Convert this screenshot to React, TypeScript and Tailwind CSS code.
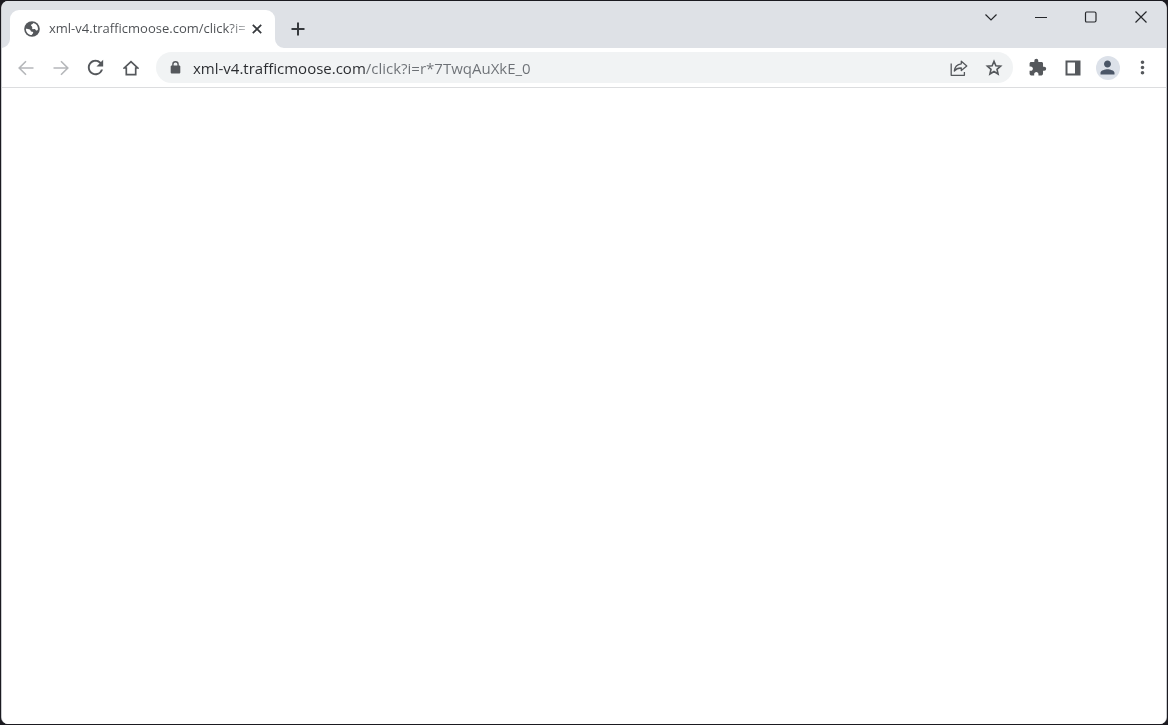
import { useState, type ReactNode } from "react";
import { MdExtension, MdMoreVert, MdPerson, MdRefresh } from "react-icons/md";

function ToolButton({
  label,
  disabled = false,
  children,
}: {
  label: string;
  disabled?: boolean;
  children: ReactNode;
}) {
  return (
    <button
      type="button"
      aria-label={label}
      disabled={disabled}
      className="flex h-8 w-[35px] shrink-0 items-center justify-center text-[#55585c] disabled:text-[#b5b7ba]"
    >
      {children}
    </button>
  );
}

function CaptionButton({ label, d }: { label: string; d: string }) {
  return (
    <button
      type="button"
      aria-label={label}
      className="flex h-8 w-[50px] items-center justify-center text-[#25272b]"
    >
      <svg width="14" height="14" viewBox="0 0 14 14" fill="none" stroke="currentColor" strokeWidth="1.2">
        <path d={d} />
      </svg>
    </button>
  );
}

function TabStrip() {
  return (
    <header className="flex h-[47px] shrink-0 items-start justify-between bg-[#dee1e6]">
      <div className="flex min-w-0 items-end pt-[9px] pl-2">
        <div className="relative flex h-[38px] w-[265px] items-center rounded-t-[9px] bg-white pr-2 pl-[14px]">
          <svg className="absolute bottom-0 -left-[9px] text-white" width="9" height="9" viewBox="0 0 9 9" fill="currentColor">
            <path d="M9 0v9H0a9 9 0 0 0 9-9z" />
          </svg>
          <svg className="absolute -right-[9px] bottom-0 text-white" width="9" height="9" viewBox="0 0 9 9" fill="currentColor">
            <path d="M0 0v9h9a9 9 0 0 1-9-9z" />
          </svg>
          <svg className="shrink-0" width="16" height="16" viewBox="0 0 16 16">
            <circle cx="8" cy="8" r="7.8" fill="#55585c" />
            <path
              fill="#fff"
              d="M9.300 2.100C8.900 3.400 7.200 3.300 7 4.300c-.1.900 1 .8 1.200 1.600.2.800-.4 1.500.3 2.100.8.600 1.700-.3 2.600.2.700.5.600 1.300 1.400 1.300.7 0 1.200-.5 1.500-1.300C14.100 5.100 12.100 2.700 9.300 2.100zM1.900 7.700c1.300.2 2.900.1 3.900.8.900.6.700 1.700 1.500 2.100.8.300 1.700 0 1.900.8.200.9-.9 1.300-1.500 2.700C4.500 14 1.800 11.200 1.900 7.700z"
            />
          </svg>
          <span className="ml-[9px] min-w-0 flex-1 overflow-hidden bg-linear-to-r from-[#4b4e52] from-90% to-[#c8cacc] bg-clip-text text-[13px] whitespace-nowrap text-transparent">
            xml-v4.trafficmoose.com/click?i=
          </span>
          <button type="button" aria-label="Close tab" className="flex size-5 shrink-0 items-center justify-center text-[#36393d]">
            <svg width="10" height="10" viewBox="0 0 10 10" fill="none" stroke="currentColor" strokeWidth="1.7">
              <path d="M.8.8l8.4 8.4M9.2.8L.8 9.2" />
            </svg>
          </button>
        </div>
        <button type="button" aria-label="New tab" className="ml-[7px] flex h-[38px] w-8 items-center justify-center text-[#36393d]">
          <svg width="14" height="14" viewBox="0 0 14 14" fill="none" stroke="currentColor" strokeWidth="2">
            <path d="M7 .5v13M.5 7h13" />
          </svg>
        </button>
      </div>
      <div className="flex shrink-0">
        <CaptionButton label="Search tabs" d="M1.500 4.500L7 10l5.500-5.500" />
        <CaptionButton label="Minimize" d="M1 7.500h12" />
        <CaptionButton label="Maximize" d="M2.500 2h8q1.500 0 1.500 1.500v7q0 1.500-1.500 1.500h-8Q1.500 12 1.500 10.500v-7Q1.500 2 2.500 2z" />
        <CaptionButton label="Close" d="M1.500 1.500l11 11M12.500 1.500l-11 11" />
      </div>
    </header>
  );
}

function Toolbar() {
  const [url, setUrl] = useState("xml-v4.trafficmoose.com/click?i=r*7TwqAuXkE_0");
  return (
    <nav className="flex h-10 shrink-0 items-center border-b border-[#dcdddf] bg-white px-1.5">
      <ToolButton label="Back" disabled>
        <svg width="16" height="16" viewBox="0 0 16 16" fill="none" stroke="currentColor" strokeWidth="1.600">
          <path d="M15.500 8H1.500M8 1.200L1.200 8 8 14.800" />
        </svg>
      </ToolButton>
      <ToolButton label="Forward" disabled>
        <svg width="16" height="16" viewBox="0 0 16 16" fill="none" stroke="currentColor" strokeWidth="1.600">
          <path d="M.5 8h14M8 1.200L14.800 8 8 14.800" />
        </svg>
      </ToolButton>
      <ToolButton label="Reload">
        <MdRefresh className="size-[23px]" />
      </ToolButton>
      <ToolButton label="Home">
        <svg width="16" height="16" viewBox="0 0 16 16" fill="none" stroke="currentColor" strokeWidth="1.700">
          <path d="M3.300 8v6.700h9.400V8h2L8 1.600 1.300 8z" />
        </svg>
      </ToolButton>
      <div className="ml-2 flex h-[31px] min-w-0 flex-1 items-center rounded-full bg-[#f1f3f4] pr-0.5 pl-3">
        <svg className="shrink-0 text-[#55585c]" width="15" height="15" viewBox="0 0 15 15">
          <path d="M4.900 6V4.300a2.600 2.600 0 0 1 5.200 0V6" fill="none" stroke="currentColor" strokeWidth="1.400" />
          <rect x="2.700" y="5.500" width="9.600" height="8" rx="1" fill="currentColor" />
        </svg>
        <input
          aria-label="Address and search bar"
          value={url}
          onChange={(e) => setUrl(e.target.value)}
          spellCheck={false}
          className="mr-3 ml-[10px] h-[30px] min-w-0 flex-1 bg-[linear-gradient(to_right,#292b2f_172px,#6c7075_172px)] bg-clip-text text-[15px] text-transparent caret-black outline-none"
        />
        <ToolButton label="Share this page">
          <svg width="18" height="18" viewBox="0 0 18 18" fill="none" stroke="currentColor" strokeWidth="1.300" strokeLinejoin="round">
            <path d="M1.200 4.500v11.800h13.200v-3.300" />
            <path d="M11.300 2.200l5.500 4.700-5.500 4.700V9C8.200 8.900 6 9.800 4.300 12c.4-3.800 2.600-6.700 7-7.200z" />
          </svg>
        </ToolButton>
        <ToolButton label="Bookmark this tab">
          <svg width="18" height="18" viewBox="0 0 18 18" fill="none" stroke="currentColor" strokeWidth="1.600">
            <path d="M9 2.300l1.850 4.450 4.750.4-3.600 3.150 1.080 4.700L9 12.500 4.920 15 6 10.300 2.400 7.150l4.750-.4z" />
          </svg>
        </ToolButton>
      </div>
      <div className="ml-[7px] flex shrink-0">
        <ToolButton label="Extensions">
          <MdExtension className="size-[19px]" />
        </ToolButton>
        <ToolButton label="Side panel">
          <svg width="16" height="16" viewBox="0 0 16 16" fill="currentColor">
            <path fillRule="evenodd" d="M.5.500h15v15H.5zM2.500 2.500v11H10v-11z" />
          </svg>
        </ToolButton>
        <ToolButton label="Profile">
          <span className="flex size-6 items-center justify-center rounded-full bg-[#dce1e9] text-[#4b5667]">
            <MdPerson className="size-[21px]" />
          </span>
        </ToolButton>
        <ToolButton label="Menu">
          <MdMoreVert className="size-[21px]" />
        </ToolButton>
      </div>
    </nav>
  );
}

export default function App() {
  return (
    <div className="flex min-h-screen bg-[#1b1a20] p-px font-['Open_Sans','Noto_Sans',sans-serif]">
      <div className="flex min-w-0 flex-1 flex-col overflow-hidden rounded-[7px] border-x border-[#c9cbce] bg-white">
        <TabStrip />
        <Toolbar />
        <main className="flex-1 bg-white" />
      </div>
    </div>
  );
}
